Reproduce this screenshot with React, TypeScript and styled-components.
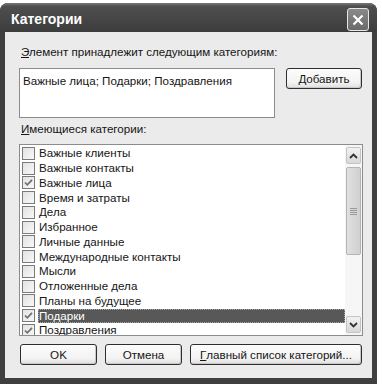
import React from 'react';
import styled, { createGlobalStyle } from 'styled-components';

const GlobalStyle = createGlobalStyle`
  html, body {
    margin: 0;
    padding: 0;
    background: #fff;
  }
  body {
    font-family: "Liberation Sans", Arial, sans-serif;
    font-size: 11.6px;
    color: #151515;
  }
`;

const categories = [
  { name: 'Важные клиенты', checked: false },
  { name: 'Важные контакты', checked: false },
  { name: 'Важные лица', checked: true },
  { name: 'Время и затраты', checked: false },
  { name: 'Дела', checked: false },
  { name: 'Избранное', checked: false },
  { name: 'Личные данные', checked: false },
  { name: 'Международные контакты', checked: false },
  { name: 'Мысли', checked: false },
  { name: 'Отложенные дела', checked: false },
  { name: 'Планы на будущее', checked: false },
  { name: 'Подарки', checked: true, selected: true },
  { name: 'Поздравления', checked: true },
];

const CheckMark = () => (
  <svg width="9" height="9" viewBox="0 0 9 9">
    <path d="M1 4.5 L3.3 6.8 L8 1.8" fill="none" stroke="#6e6e6e" strokeWidth="1.7" />
  </svg>
);

const Chevron: React.FC<{ down?: boolean }> = ({ down }) => (
  <svg width="9" height="6" viewBox="0 0 9 6">
    <path
      d={down ? 'M1 1 L4.5 4.5 L8 1' : 'M1 5 L4.5 1.5 L8 5'}
      fill="none"
      stroke="#333"
      strokeWidth="1.8"
    />
  </svg>
);

export default function App() {
  return (
    <>
      <GlobalStyle />
      <Window>
        <TitleBar>
          <Title>Категории</Title>
          <CloseButton>
            <svg width="12" height="12" viewBox="0 0 12 12">
              <path d="M1.5 1.5 L10.5 10.5 M10.5 1.5 L1.5 10.5" stroke="#fff" strokeWidth="2.2" />
            </svg>
          </CloseButton>
        </TitleBar>
        <Client>
          <Label>
            <u>Э</u>лемент принадлежит следующим категориям:
          </Label>
          <TopRow>
            <TextBox>Важные лица; Подарки; Поздравления</TextBox>
            <PushButton $width={76}>
              <u>Д</u>обавить
            </PushButton>
          </TopRow>
          <Label $top={4}>
            <u>И</u>меющиеся категории:
          </Label>
          <ListBox>
            <Items>
              {categories.map((c) => (
                <Item key={c.name}>
                  <CheckBox>{c.checked && <CheckMark />}</CheckBox>
                  <ItemText $selected={!!c.selected}>{c.name}</ItemText>
                </Item>
              ))}
            </Items>
            <ScrollBar>
              <ScrollButton>
                <Chevron />
              </ScrollButton>
              <Track>
                <Thumb>
                  <Grip />
                  <Grip />
                  <Grip />
                  <Grip />
                </Thumb>
              </Track>
              <ScrollButton>
                <Chevron down />
              </ScrollButton>
            </ScrollBar>
          </ListBox>
          <BottomRow>
            <PushButton $width={77}>OK</PushButton>
            <PushButton $width={77}>Отмена</PushButton>
            <PushButton $width={172}>
              <u>Г</u>лавный список категорий...
            </PushButton>
          </BottomRow>
        </Client>
      </Window>
    </>
  );
}

const Window = styled.div`
  margin-top: 3px;
  width: 377px;
  height: 381px;
  display: flex;
  flex-direction: column;
  background: #3f3f3f;
  border-radius: 8px 8px 0 0;
  box-sizing: border-box;
`;

const TitleBar = styled.div`
  height: 29px;
  flex-shrink: 0;
  display: flex;
  align-items: center;
  justify-content: space-between;
  padding: 0 8px 0 11px;
  border-radius: 8px 8px 0 0;
  background: linear-gradient(#777 0%, #4e4e4e 12%, #454545 60%, #3c3c3c 100%);
`;

const Title = styled.div`
  font-weight: bold;
  font-size: 14px;
  color: #fff;
  padding-top: 2px;
`;

const CloseButton = styled.div`
  width: 20px;
  height: 21px;
  margin-top: 4px;
  display: flex;
  align-items: center;
  justify-content: center;
  border: 1px solid #e6e6e6;
  border-radius: 3px;
  background: linear-gradient(#8a8a8a, #6a6a6a);
`;

const Client = styled.div`
  flex: 1;
  margin: 0 5px 6px;
  padding: 13px 9px 0 14px;
  background: #ebebeb;
  display: flex;
  flex-direction: column;
`;

const Label = styled.div<{ $top?: number }>`
  height: 14px;
  line-height: 14px;
  padding-left: 2px;
  margin-top: ${(p) => p.$top ?? 0}px;
`;

const TopRow = styled.div`
  display: flex;
  align-items: flex-start;
  gap: 11px;
  margin-top: 9px;
`;

const TextBox = styled.div`
  width: 256px;
  height: 50px;
  box-sizing: border-box;
  border: 1px solid #8c8c8c;
  background: #fff;
  padding: 5px 3px;
  line-height: 14px;
`;

const PushButton = styled.div<{ $width: number }>`
  width: ${(p) => p.$width}px;
  height: 21px;
  box-sizing: border-box;
  display: flex;
  align-items: center;
  justify-content: center;
  border: 1px solid #2e2e2e;
  border-radius: 3px;
  background: linear-gradient(#fcfcfc, #f3f3f3 70%, #dedede);
  box-shadow: inset -1px -1px 0 #c8c8c8;
`;

const ListBox = styled.div`
  margin-top: 8px;
  width: 344px;
  height: 192px;
  box-sizing: border-box;
  border: 1px solid #8c8c8c;
  background: #fff;
  display: flex;
  overflow: hidden;
`;

const Items = styled.div`
  flex: 1;
  padding-top: 1px;
  overflow: hidden;
`;

const Item = styled.div`
  height: 14.75px;
  display: flex;
  align-items: center;
  padding-left: 2px;
`;

const CheckBox = styled.div`
  width: 13px;
  height: 13px;
  box-sizing: border-box;
  flex-shrink: 0;
  border: 1px solid #7a7a7a;
  background: linear-gradient(135deg, #e2e2e2, #f8f8f8);
  display: flex;
  align-items: center;
  justify-content: center;
`;

const ItemText = styled.div<{ $selected: boolean }>`
  flex: 1;
  margin-left: 3px;
  padding-left: 1px;
  height: 14px;
  line-height: 14px;
  color: ${(p) => (p.$selected ? '#fff' : '#151515')};
  background: ${(p) => (p.$selected ? '#585858' : 'transparent')};
  outline: ${(p) => (p.$selected ? '1px dotted #aaa' : 'none')};
  outline-offset: -1px;
`;

const ScrollBar = styled.div`
  width: 17px;
  flex-shrink: 0;
  display: flex;
  flex-direction: column;
  background: #f6f6f6;
`;

const ScrollButton = styled.div`
  height: 15px;
  margin: 2px 1px;
  display: flex;
  align-items: center;
  justify-content: center;
  border: 1px solid #c4c4c4;
  border-radius: 2px;
  background: linear-gradient(#f2f2f2, #d8d8d8);
`;

const Track = styled.div`
  flex: 1;
  padding-top: 1px;
`;

const Thumb = styled.div`
  height: 88px;
  margin: 0 1px;
  box-sizing: border-box;
  border: 1px solid #b4b4b4;
  border-radius: 2px;
  background: linear-gradient(90deg, #e0e0e0, #d0d0d0);
  display: flex;
  flex-direction: column;
  align-items: center;
  justify-content: center;
  gap: 1px;
`;

const Grip = styled.div`
  width: 7px;
  height: 1px;
  background: #999;
`;

const BottomRow = styled.div`
  display: flex;
  gap: 8px;
  margin-top: 8px;
  padding-left: 1px;
`;
